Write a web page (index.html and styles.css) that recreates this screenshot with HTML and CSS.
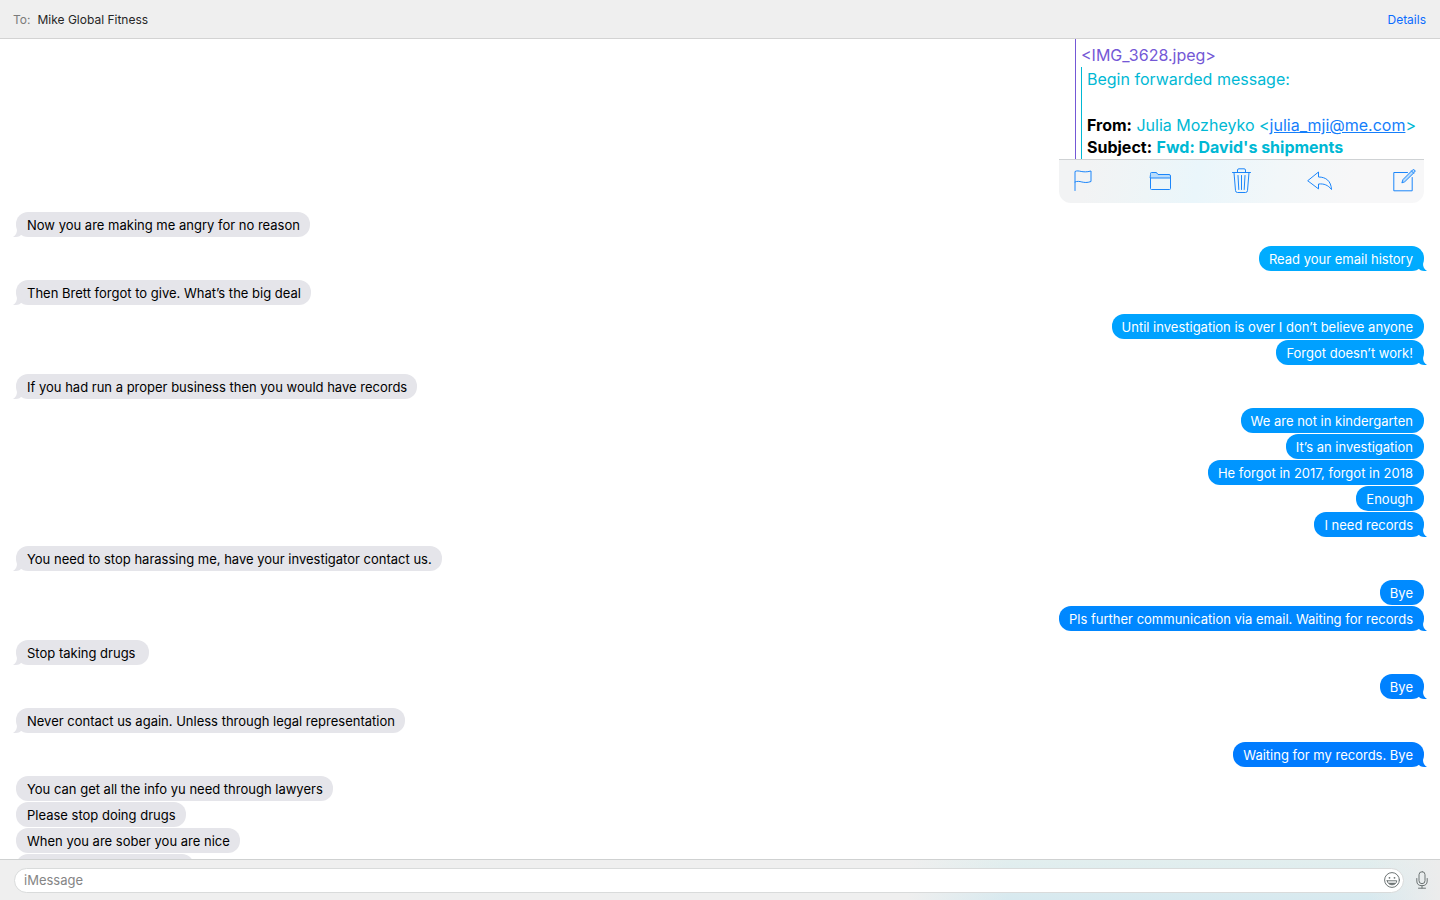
FILE: index.html
```html
<!DOCTYPE html>
<html lang="en">
<head>
<meta charset="utf-8">
<title>Messages</title>
<link rel="stylesheet" href="styles.css">
</head>
<body>
<div class="window">
  <header class="header">
    <p class="recipient"><span class="recipient-label">To:</span><span>Mike Global Fitness</span></p>
    <button class="details" type="button">Details</button>
  </header>

  <main class="chat">
    <section class="group sent">
      <article class="mail">
        <div class="quote">
          <p class="attachment">&lt;IMG_3628.jpeg&gt;</p>
          <div class="quote-inner">
            <p class="forwarded">Begin forwarded message:</p>
            <p><b>From:</b> Julia Mozheyko &lt;<a href="mailto:julia_mji@me.com">julia_mji@me.com</a>&gt;</p>
            <p><b>Subject:</b> <strong>Fwd: David's shipments</strong></p>
          </div>
        </div>
        <div class="toolbar">
          <button type="button" aria-label="Flag"><svg width="18" height="26" viewBox="0 0 18 26"><path d="M1 22.500V3.500C5 1.500 8 5.500 17 3V13.500C9 16.500 6 11.500 1 14"/></svg></button>
          <button type="button" aria-label="Move to folder"><svg width="26" height="26" viewBox="0 0 26 26"><path class="tint" d="M1.500 6V5.500Q1.500 4.500 2.500 4.500H7Q8 4.500 8.500 6L9 6.500H20Q21.500 6.500 21.500 8V10H1.500Z"/><path d="M1.500 10V20.500Q1.500 21.500 2.500 21.500H20.500Q21.500 21.500 21.500 20.500V10"/></svg></button>
          <button type="button" aria-label="Delete"><svg width="19" height="26" viewBox="0 0 19 26"><path d="M0.500 4.500H18.500M2 4.500L3.500 22.500Q3.600 24.500 5.500 24.500H13.500Q15.400 24.500 15.500 22.500L17 4.500M5.500 4V2Q5.500 0.800 7 0.800H12Q13.500 0.800 13.500 2V4M6 7.500L6.800 21.500M9.500 7.500V21.500M13 7.500L12.200 21.500"/></svg></button>
          <button type="button" aria-label="Reply"><svg width="29" height="26" viewBox="0 0 29 26"><path d="M1 12.500L11.500 4V9C19 9 24 13 24.500 21.500C21 17 17 15.500 11.500 16V20.500Z"/></svg></button>
          <button type="button" aria-label="Compose"><svg width="23" height="26" viewBox="0 0 23 26"><path d="M14.500 4.500H0.800V22.800H19.200V9.500"/><path class="tint" d="M9 14.500L10 11.500L19.500 2Q20.500 1 21.500 2Q22.700 3 21.700 4L12 13.500ZM18.500 3L20.700 5.200"/></svg></button>
        </div>
      </article>
    </section>

    <section class="group received">
      <p class="bubble tail">Now you are making me angry for no reason</p>
    </section>
    <section class="group sent">
      <p class="bubble tail">Read your email history</p>
    </section>
    <section class="group received">
      <p class="bubble tail">Then Brett forgot to give. What’s the big deal</p>
    </section>
    <section class="group sent">
      <p class="bubble">Until investigation is over I don’t believe anyone</p>
      <p class="bubble tail">Forgot doesn’t work!</p>
    </section>
    <section class="group received">
      <p class="bubble tail">If you had run a proper business then you would have records</p>
    </section>
    <section class="group sent">
      <p class="bubble">We are not in kindergarten</p>
      <p class="bubble">It’s an investigation</p>
      <p class="bubble">He forgot in 2017, forgot in 2018</p>
      <p class="bubble">Enough</p>
      <p class="bubble tail">I need records</p>
    </section>
    <section class="group received">
      <p class="bubble tail">You need to stop harassing me, have your investigator contact us.</p>
    </section>
    <section class="group sent">
      <p class="bubble">Bye</p>
      <p class="bubble tail">Pls further communication via email. Waiting for records</p>
    </section>
    <section class="group received">
      <p class="bubble tail">Stop taking drugs&nbsp;</p>
    </section>
    <section class="group sent">
      <p class="bubble tail">Bye</p>
    </section>
    <section class="group received">
      <p class="bubble tail">Never contact us again. Unless through legal representation</p>
    </section>
    <section class="group sent">
      <p class="bubble tail">Waiting for my records. Bye</p>
    </section>
    <section class="group received">
      <p class="bubble">You can get all the info yu need through lawyers</p>
      <p class="bubble">Please stop doing drugs</p>
      <p class="bubble">When you are sober you are nice</p>
      <p class="bubble pending"></p>
    </section>
  </main>

  <footer class="composer">
    <div class="field">
      <input type="text" placeholder="iMessage" aria-label="iMessage">
      <button type="button" aria-label="Emoji"><svg width="16" height="16" viewBox="0 0 16 16"><circle cx="8" cy="8" r="7.400"/><circle class="dot" cx="5.500" cy="5.800" r="0.900"/><circle class="dot" cx="10.500" cy="5.800" r="0.900"/><path d="M3.200 8.800H12.800C12.300 14.200 3.700 14.200 3.200 8.800Z"/><path class="dot" d="M4.300 10.800H11.700C10.500 13.300 5.500 13.300 4.300 10.800Z"/></svg></button>
    </div>
    <button type="button" aria-label="Record audio"><svg width="12" height="18" viewBox="0 0 12 18"><rect x="3" y="0.700" width="6" height="12" rx="3"/><path d="M0.800 7.500V10Q0.800 14.700 6 14.700Q11.200 14.700 11.200 10V7.500M6 14.700V17M2.500 17.200H9.500"/></svg></button>
  </footer>
</div>
</body>
</html>
```
FILE: styles.css
```css
* {
  box-sizing: border-box;
}

body,
p {
  margin: 0;
}

body {
  background: #fff;
  color: #000;
  font: 13px/25px Inter, "Liberation Sans", sans-serif;
}

button {
  display: flex;
  padding: 0;
  border: 0;
  background: none;
  color: inherit;
  font: inherit;
}

svg {
  display: block;
  fill: none;
  stroke: currentColor;
  stroke-linecap: round;
  stroke-linejoin: round;
}

.window {
  display: flex;
  flex-direction: column;
  height: 100vh;
}

.header {
  display: flex;
  align-items: center;
  justify-content: space-between;
  height: 39px;
  padding: 0 14px 0 13px;
  border-bottom: 1px solid #d3d3d3;
  background: #efefef;
  color: #262626;
  font-size: 12px;
}

.recipient {
  display: flex;
  gap: 7px;
}

.recipient-label {
  color: #7b7b7b;
}

.details {
  color: #0a6cff;
}

.chat {
  display: flex;
  flex: 1;
  flex-direction: column;
  gap: 9px;
  min-height: 0;
  padding: 0 16px;
  overflow: hidden;
}

.group {
  display: flex;
  flex: none;
  flex-direction: column;
  align-items: flex-start;
  gap: 1px;
}

.sent {
  align-items: flex-end;
}

.bubble {
  position: relative;
  min-height: 25px;
  padding: 1px 10px 0 11px;
  border-radius: 12px;
  background: #e5e5ea;
  line-height: 24px;
}

.sent .bubble {
  padding: 1px 11px 0 10px;
  background: linear-gradient(#00acff 260px, #00a2ff 327px, #007bff 755px) fixed;
  color: #fff;
}

.tail::after {
  position: absolute;
  bottom: 0;
  left: -3px;
  width: 13px;
  height: 12px;
  background: inherit;
  clip-path: path("M8 0 H4 V4 C4 8 3 10 0 12 C4 12 6 12 8 10 L13 8 Z");
  content: "";
}

.sent .tail::after {
  right: -3px;
  left: auto;
  clip-path: path("M5 0 H9 V4 C9 8 10 10 13 12 C9 12 7 12 5 10 L0 8 Z");
}

.pending {
  width: 178px;
}

.mail {
  width: 365px;
  overflow: hidden;
  border-radius: 0 0 12px 12px;
  font-size: 16px;
  line-height: 22px;
}

.quote {
  margin-left: 16px;
  padding: 4px 0 0 5px;
  border-left: 1px solid #7458d6;
}

.attachment {
  line-height: 24px;
  color: #7458d6;
}

.quote-inner {
  padding: 1px 0 1px 5px;
  border-left: 1px solid #00b8d4;
  color: #00b8d4;
}

.quote-inner b {
  color: #000;
}

.quote-inner a {
  color: #147efb;
}

.forwarded {
  margin-bottom: 24px;
}

.toolbar {
  display: flex;
  align-items: center;
  justify-content: space-between;
  height: 44px;
  padding: 0 8px 2px 15px;
  border-top: 1px solid #cfd2d4;
  background: linear-gradient(100deg, #f2f3f4 8%, #eef5f7 25%, #eaf6fb 38%, #f2f7f9 60%, #f7f7f8 80%);
}

.toolbar button {
  color: #1c86fa;
}

.tint {
  fill: #b9dcfb;
}

.composer {
  display: flex;
  align-items: center;
  gap: 12px;
  height: 41px;
  padding: 0 12px 0 14px;
  border-top: 1px solid #cfd1d1;
  background:
    linear-gradient(90deg, #efefef 63%, transparent 70%, transparent 95%, #ececec 100%),
    linear-gradient(#e2eeee, #d7e9ef);
  color: #6d7474;
}

.field {
  display: flex;
  flex: 1;
  align-items: center;
  height: 25px;
  padding: 0 3px 0 9px;
  border: 1px solid #d9dbdb;
  border-radius: 13px;
  background: #fff;
}

.field input {
  flex: 1;
  min-width: 0;
  padding: 0;
  border: 0;
  outline: 0;
  background: none;
  font: inherit;
}

.field input::placeholder {
  color: #858585;
}

.dot {
  fill: currentColor;
  stroke: none;
}
```
